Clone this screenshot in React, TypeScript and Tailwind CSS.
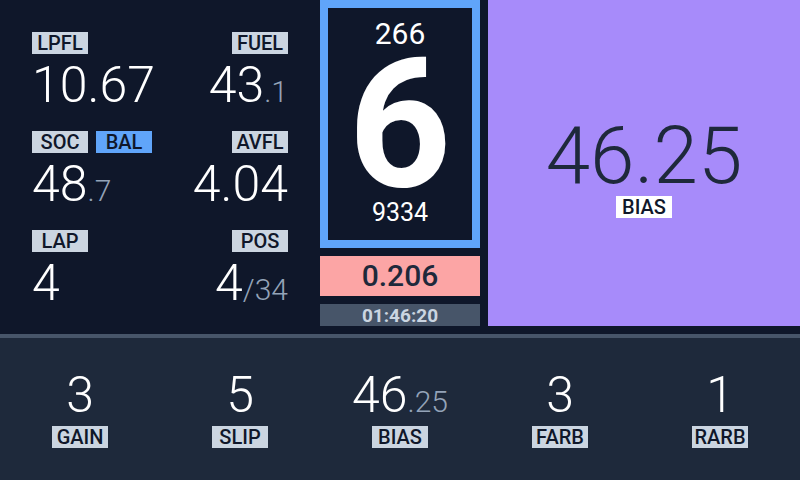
import React from "react";

const Label = ({ text, className = "bg-[#cbd5e1]" }: { text: string; className?: string }) => (
  <div
    className={`w-14 h-[22px] flex items-center justify-center text-[20px] leading-[22px] font-medium text-[#0f172a] ${className}`}
  >
    {text}
  </div>
);

const Value = ({ main, small, right = false }: { main: string; small?: string; right?: boolean }) => (
  <div className={`mt-[6px] h-[50px] text-[50px] leading-none font-light text-white whitespace-nowrap ${right ? "text-right" : ""}`}>
    {main}
    {small && <span className="text-[30px] text-[#94a3b8]">{small}</span>}
  </div>
);

const Cell = ({
  labels,
  main,
  small,
  right = false,
}: {
  labels: { text: string; cls?: string }[];
  main: string;
  small?: string;
  right?: boolean;
}) => (
  <div className={`flex flex-col ${right ? "items-end" : "items-start"}`}>
    <div className="flex gap-2">
      {labels.map((l) => (
        <Label key={l.text} text={l.text} className={l.cls ?? "bg-[#cbd5e1]"} />
      ))}
    </div>
    <Value main={main} small={small} right={right} />
  </div>
);

const BottomItem = ({ main, small, label }: { main: string; small?: string; label: string }) => (
  <div className="flex-1 flex flex-col items-center">
    <div className="h-[50px] text-[50px] leading-none font-light text-white whitespace-nowrap">
      {main}
      {small && <span className="text-[30px] text-[#94a3b8]">{small}</span>}
    </div>
    <div className="mt-[6px]">
      <Label text={label} />
    </div>
  </div>
);

export default function App() {
  return (
    <div
      className="w-[800px] h-[480px] overflow-hidden bg-[#0f172a] flex flex-col"
      style={{ fontFamily: "Roboto, 'Liberation Sans', sans-serif" }}
    >
      <div className="h-[334px] flex">
        {/* left panel */}
        <div className="w-[320px] px-8 pt-8 grid grid-cols-2 gap-y-[21px] content-start">
          <Cell labels={[{ text: "LPFL" }]} main="10.67" />
          <Cell labels={[{ text: "FUEL" }]} main="43" small=".1" right />
          <Cell labels={[{ text: "SOC" }, { text: "BAL", cls: "bg-[#60a5fa]" }]} main="48" small=".7" />
          <Cell labels={[{ text: "AVFL" }]} main="4.04" right />
          <Cell labels={[{ text: "LAP" }]} main="4" />
          <Cell labels={[{ text: "POS" }]} main="4" small="/34" right />
        </div>

        {/* center column */}
        <div className="w-[160px] flex flex-col gap-2 h-[326px]">
          <div className="h-[248px] border-8 border-[#60a5fa] bg-[#0f172a] flex flex-col items-center pt-[11px] text-white">
            <div className="text-[30px] leading-none">266</div>
            <div className="text-[180px] leading-[151px] font-bold h-[151px]">6</div>
            <div className="text-[25px] leading-none">9334</div>
          </div>
          <div className="h-10 bg-[#fca5a5] flex items-center justify-center text-[30px] leading-none font-medium text-[#1e293b]">
            0.206
          </div>
          <div className="h-[22px] bg-[#475569] flex items-center justify-center text-[19px] leading-none font-bold text-[#cbd5e1]">
            01:46:20
          </div>
        </div>

        {/* right panel */}
        <div className="ml-2 flex-1 h-[326px] bg-[#a78bfa] flex flex-col items-center justify-center pt-2">
          <div className="text-[80px] leading-none font-light text-[#1e293b]">46.25</div>
          <Label text="BIAS" className="bg-white" />
        </div>
      </div>

      {/* bottom bar */}
      <div className="flex-1 border-t-4 border-[#475569] bg-[#1e293b] flex items-center">
        <BottomItem main="3" label="GAIN" />
        <BottomItem main="5" label="SLIP" />
        <BottomItem main="46" small=".25" label="BIAS" />
        <BottomItem main="3" label="FARB" />
        <BottomItem main="1" label="RARB" />
      </div>
    </div>
  );
}
